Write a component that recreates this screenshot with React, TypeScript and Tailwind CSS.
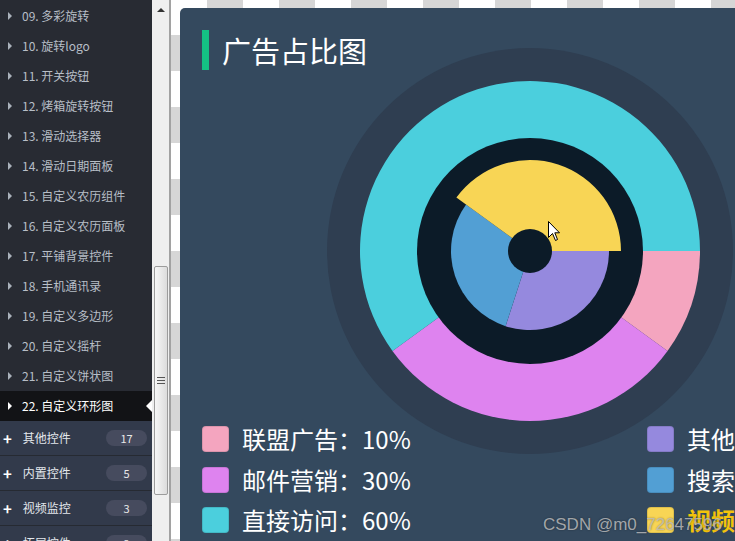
import React from "react";

const navItems = [
  "09. 多彩旋转",
  "10. 旋转logo",
  "11. 开关按钮",
  "12. 烤箱旋转按钮",
  "13. 滑动选择器",
  "14. 滑动日期面板",
  "15. 自定义农历组件",
  "16. 自定义农历面板",
  "17. 平铺背景控件",
  "18. 手机通讯录",
  "19. 自定义多边形",
  "20. 自定义摇杆",
  "21. 自定义饼状图",
];

const groups = [
  { name: "其他控件", count: 17 },
  { name: "内置控件", count: 5 },
  { name: "视频监控", count: 3 },
  { name: "拓展控件", count: 2 },
];

const C = 205;

function sector(r: number, a0: number, a1: number) {
  const rad = (d: number) => (d * Math.PI) / 180;
  const x0 = C + r * Math.cos(rad(a0));
  const y0 = C - r * Math.sin(rad(a0));
  const x1 = C + r * Math.cos(rad(a1));
  const y1 = C - r * Math.sin(rad(a1));
  const large = a1 - a0 > 180 ? 1 : 0;
  return `M${C} ${C} L${x0} ${y0} A${r} ${r} 0 ${large} 0 ${x1} ${y1} Z`;
}

const outer = [
  { color: "#f4a5bf", a0: -36, a1: 0 },
  { color: "#de83ef", a0: -144, a1: -36 },
  { color: "#4bcfdd", a0: 0, a1: 216 },
];

const inner = [
  { color: "#9589de", a0: 252, a1: 360, r: 79 },
  { color: "#529fd4", a0: 144, a1: 252, r: 79 },
  { color: "#f8d555", a0: 0, a1: 144, r: 91 },
];

const legendLeft = [
  { color: "#f4a5bf", text: "联盟广告：10%" },
  { color: "#de83ef", text: "邮件营销：30%" },
  { color: "#4bcfdd", text: "直接访问：60%" },
];

const legendRight = [
  { color: "#9589de", text: "其他：30%", active: false },
  { color: "#529fd4", text: "搜索：30%", active: false },
  { color: "#f8d555", text: "视频：40%", active: true },
];

function RingChart() {
  return (
    <svg width="410" height="410" viewBox="0 0 410 410">
      <circle cx={C} cy={C} r={203} fill="#2f3e51" />
      {outer.map((s) => (
        <path key={s.color} d={sector(170, s.a0, s.a1)} fill={s.color} />
      ))}
      <circle cx={C} cy={C} r={113} fill="#0c1b28" />
      {inner.map((s) => (
        <path key={s.color} d={sector(s.r, s.a0, s.a1)} fill={s.color} />
      ))}
      <circle cx={C} cy={C} r={22} fill="#0c1b28" />
    </svg>
  );
}

function Sidebar() {
  return (
    <div className="flex w-[152px] shrink-0 flex-col bg-[#282b33] pt-[1px] font-['Noto_Sans_CJK_SC',sans-serif] text-[12px]">
      {navItems.map((item) => (
        <div key={item} className="flex h-[30px] shrink-0 items-center text-[#b7bec7]">
          <span className="ml-[8px] mr-[10px] h-0 w-0 border-y-[4px] border-l-[4px] border-y-transparent border-l-[#aab2bb]" />
          <span>{item}</span>
        </div>
      ))}
      <div className="flex h-[30px] shrink-0 items-center bg-[#121316] text-white">
        <span className="ml-[8px] mr-[10px] h-0 w-0 border-y-[4px] border-l-[4px] border-y-transparent border-l-white" />
        <span className="flex-1">22. 自定义环形图</span>
        <span className="h-0 w-0 border-y-[6px] border-r-[6px] border-y-transparent border-r-white" />
      </div>
      {groups.map((g) => (
        <div
          key={g.name}
          className="flex h-[35px] shrink-0 items-center border-b border-[#262a32] bg-[#323a4b] text-[#e3e7ec]"
        >
          <span className="ml-[3px] mr-[11px] text-[15px] font-bold leading-none text-white">+</span>
          <span className="flex-1">{g.name}</span>
          <span className="mr-[5px] flex h-[16px] w-[41px] items-center justify-center rounded-full bg-[#464b5e] text-[11px] text-[#e8e8e8]">
            {g.count}
          </span>
        </div>
      ))}
    </div>
  );
}

function Scrollbar() {
  return (
    <div className="flex w-[17px] shrink-0 flex-col items-center bg-[#efefef]">
      <span className="mt-[8px] h-0 w-0 border-x-[4px] border-b-[4px] border-x-transparent border-b-[#333]" />
      <div className="mt-[254px] flex h-[229px] w-[14px] shrink-0 items-center justify-center rounded-[2px] border border-[#9c9c9c] bg-[linear-gradient(90deg,#f7f7f7,#dcdcdc)]">
        <div className="flex flex-col gap-[2px]">
          <span className="h-[1px] w-[8px] bg-[#555]" />
          <span className="h-[1px] w-[8px] bg-[#555]" />
          <span className="h-[1px] w-[8px] bg-[#555]" />
        </div>
      </div>
    </div>
  );
}

function LegendItem({ color, text, active }: { color: string; text: string; active?: boolean }) {
  return (
    <div className="flex h-[26px] items-center gap-[13px]">
      <span className="h-[26px] w-[27px] shrink-0 rounded-[4px] border border-black/10" style={{ backgroundColor: color }} />
      <span
        className={
          active
            ? "whitespace-nowrap text-[24px] font-bold leading-[26px] text-[#f3c30c]"
            : "whitespace-nowrap text-[24px] leading-[26px] text-white"
        }
      >
        {text}
      </span>
    </div>
  );
}

export default function App() {
  return (
    <div className="relative flex h-[541px] w-[735px] overflow-hidden bg-white">
      <Sidebar />
      <Scrollbar />
      <div className="w-[2px] shrink-0 bg-[#a2a2a2]" />
      <div className="min-w-0 flex-1 overflow-hidden bg-[conic-gradient(#d6d6d6_25%,#fff_0_50%,#d6d6d6_0_75%,#fff_0)] bg-[length:72px_72px] bg-[position:0_-1px] pl-[9px] pt-[8px]">
        <div className="grid h-[600px] w-[620px] rounded-[5px] bg-[#34495e] font-['Noto_Sans_CJK_SC',sans-serif]">
          <div className="col-start-1 row-start-1 ml-[145px] mt-[38px]">
            <RingChart />
          </div>
          <div className="col-start-1 row-start-1 flex flex-col pl-[22px] pt-[22px]">
            <div className="flex h-[40px] items-center gap-[13px]">
              <span className="h-[40px] w-[7px] bg-[#14c084]" />
              <span className="text-[29px] leading-none text-white">广告占比图</span>
            </div>
            <div className="mt-[356px] grid grid-cols-[445px_auto]">
              <div className="flex flex-col gap-[14.5px]">
                {legendLeft.map((l) => (
                  <LegendItem key={l.text} {...l} />
                ))}
              </div>
              <div className="flex flex-col gap-[14.5px]">
                {legendRight.map((l) => (
                  <LegendItem key={l.text} {...l} />
                ))}
              </div>
            </div>
          </div>
        </div>
      </div>

      <div className="absolute left-[543px] top-[512px] font-['Liberation_Sans',sans-serif] text-[17px] text-[#c4c4c4]/80 [text-shadow:0_0_2px_rgba(0,0,0,0.4)]">
        CSDN @m0_72647596
      </div>

      <svg className="absolute left-[548px] top-[221px]" width="13" height="21" viewBox="0 0 13 21">
        <path d="M0.5 0.5 L0.5 16.5 L4.5 12.5 L7.5 19.5 L9.5 18.5 L6.8 11.8 L11.5 11.8 Z" fill="white" stroke="black" strokeWidth="1" />
      </svg>
    </div>
  );
}
